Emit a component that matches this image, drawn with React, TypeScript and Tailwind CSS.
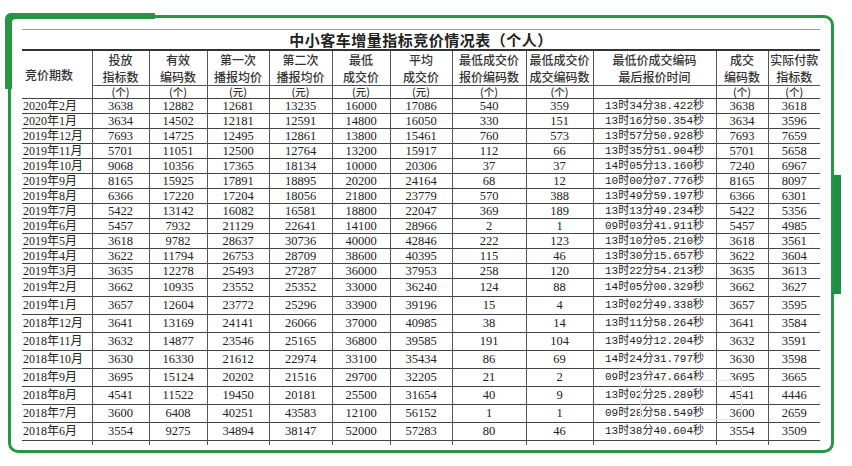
import React from 'react';

const cols = [70, 57, 58, 62, 63, 58, 62, 74, 67, 123, 52, 52];

const heads: [string, string, string][] = [
    ['投放', '指标数', '(个)'],
    ['有效', '编码数', '(个)'],
    ['第一次', '播报均价', '(元)'],
    ['第二次', '播报均价', '(元)'],
    ['最低', '成交价', '(元)'],
    ['平均', '成交价', '(元)'],
    ['最低成交价', '报价编码数', '(个)'],
    ['最低成交价', '成交编码数', '(个)'],
    ['最低价成交编码', '最后报价时间', ''],
    ['成交', '编码数', '(个)'],
    ['实际付款', '指标数', '(个)'],
];

const rows: string[][] = [
    ['2020年2月', '3638', '12882', '12681', '13235', '16000', '17086', '540', '359', '13时34分38.422秒', '3638', '3618'],
    ['2020年1月', '3634', '14502', '12181', '12591', '14800', '16050', '330', '151', '13时16分50.354秒', '3634', '3596'],
    ['2019年12月', '7693', '14725', '12495', '12861', '13800', '15461', '760', '573', '13时57分50.928秒', '7693', '7659'],
    ['2019年11月', '5701', '11051', '12500', '12764', '13200', '15917', '112', '66', '13时35分51.904秒', '5701', '5658'],
    ['2019年10月', '9068', '10356', '17365', '18134', '10000', '20306', '37', '37', '14时05分13.160秒', '7240', '6967'],
    ['2019年9月', '8165', '15925', '17891', '18895', '20200', '24164', '68', '12', '10时00分07.776秒', '8165', '8097'],
    ['2019年8月', '6366', '17220', '17204', '18056', '21800', '23779', '570', '388', '13时49分59.197秒', '6366', '6301'],
    ['2019年7月', '5422', '13142', '16082', '16581', '18800', '22047', '369', '189', '13时13分49.234秒', '5422', '5356'],
    ['2019年6月', '5457', '7932', '21129', '22641', '14100', '28966', '2', '1', '09时03分41.911秒', '5457', '4985'],
    ['2019年5月', '3618', '9782', '28637', '30736', '40000', '42846', '222', '123', '13时10分05.210秒', '3618', '3561'],
    ['2019年4月', '3622', '11794', '26753', '28709', '38600', '40395', '115', '46', '13时30分15.657秒', '3622', '3604'],
    ['2019年3月', '3635', '12278', '25493', '27287', '36000', '37953', '258', '120', '13时22分54.213秒', '3635', '3613'],
    ['2019年2月', '3662', '10935', '23552', '25352', '33000', '36240', '124', '88', '14时05分00.329秒', '3662', '3627'],
    ['2019年1月', '3657', '12604', '23772', '25296', '33900', '39196', '15', '4', '13时02分49.338秒', '3657', '3595'],
    ['2018年12月', '3641', '13169', '24141', '26066', '37000', '40985', '38', '14', '13时11分58.264秒', '3641', '3584'],
    ['2018年11月', '3632', '14877', '23546', '25165', '36800', '39585', '191', '104', '13时49分12.204秒', '3632', '3591'],
    ['2018年10月', '3630', '16330', '21612', '22974', '33100', '35434', '86', '69', '14时24分31.797秒', '3630', '3598'],
    ['2018年9月', '3695', '15124', '20202', '21516', '29700', '32205', '21', '2', '09时23分47.664秒', '3695', '3665'],
    ['2018年8月', '4541', '11522', '19450', '20181', '25500', '31654', '40', '9', '13时02分25.289秒', '4541', '4446'],
    ['2018年7月', '3600', '6408', '40251', '43583', '12100', '56152', '1', '1', '09时28分58.549秒', '3600', '2659'],
    ['2018年6月', '3554', '9275', '34894', '38147', '52000', '57283', '80', '46', '13时38分40.604秒', '3554', '3509'],
];

const serif = "font-['Liberation_Serif','Noto_Sans_CJK_SC',serif]";
const cjk = "font-['Noto_Sans_CJK_SC',sans-serif]";
const mono = "font-['Liberation_Mono','Noto_Sans_CJK_SC',monospace]";

export default function App() {
    return (
        <div className="relative w-[852px] h-[466px] bg-white overflow-hidden pt-[15px] pl-[8px] pr-[18px] pb-[13px]">
            {/* thick green accents on the frame */}
            <div className="absolute left-[5px] top-[13px] w-[150px] h-[6px] rounded-tl-[10px] bg-[#2a9446]" />
            <div className="absolute left-[5px] top-[13px] w-[7px] h-[76px] rounded-tl-[10px] bg-[#2a9446]" />
            <div className="absolute left-[833px] top-[175px] w-[8px] h-[119px] bg-[#1f8e45]" />

            <div className="h-full border-[3px] border-[#2a9446] rounded-[10px] px-[11px] pt-[11px]">
                <div className="border-t border-[#9a9a9a]" />
                <div className={`${cjk} h-[19px] text-center text-[15px] leading-[19px] font-bold text-[#222] tracking-[0.5px]`}>
                    中小客车增量指标竞价情况表（个人）
                </div>
                <table className="table-fixed border-collapse w-[798px] text-[#222]">
                    <colgroup>
                        {cols.map((w, i) => (
                            <col key={i} style={{ width: w }} />
                        ))}
                    </colgroup>
                    <thead>
                        <tr className="h-[35px] border-t-2 border-[#333]">
                            <th
                                rowSpan={2}
                                className={`${cjk} text-left pl-[3px] text-[12px] font-medium text-[#333] border-b border-[#444] p-0`}
                            >
                                竞价期数
                            </th>
                            {heads.map((h, i) => (
                                <th
                                    key={i}
                                    className={`${cjk} border-l border-[#555] text-[12px] leading-[17px] font-medium text-[#333] p-0 whitespace-nowrap`}
                                >
                                    <div>{h[0]}</div>
                                    <div>{h[1]}</div>
                                </th>
                            ))}
                        </tr>
                        <tr className="h-[12px] border-t border-[#555] border-b">
                            {heads.map((h, i) => (
                                <th
                                    key={i}
                                    className={`${cjk} border-l border-[#555] border-b border-b-[#444] text-[10.5px] leading-[12px] font-medium text-[#333] p-0`}
                                >
                                    {h[2]}
                                </th>
                            ))}
                        </tr>
                    </thead>
                    <tbody>
                        {rows.map((r, ri) => (
                            <tr key={ri} className={`${ri < 12 ? 'h-[15px]' : 'h-[18px]'} border-b border-[#444]`}>
                                {r.map((c, ci) => (
                                    <td
                                        key={ci}
                                        className={
                                            ci === 0
                                                ? `${serif} text-left pl-[1px] text-[12px] leading-[13px] p-0 whitespace-nowrap`
                                                : ci === 9
                                                  ? `${mono} border-l border-[#555] text-center text-[11px] leading-[13px] p-0 whitespace-nowrap`
                                                  : `${serif} border-l border-[#555] text-center text-[12.5px] leading-[13px] p-0`
                                        }
                                    >
                                        {c}
                                    </td>
                                ))}
                            </tr>
                        ))}
                        <tr className="h-[4px]">
                            {cols.map((_, i) => (
                                <td key={i} className={i === 0 ? 'p-0' : 'p-0 border-l border-[#555]'} />
                            ))}
                        </tr>
                    </tbody>
                </table>
            </div>

            {/* faint watermark frame */}
            <div className="absolute left-[640px] top-[380px] w-[102px] h-[40px] border border-[#e4e4e4] pointer-events-none" />
        </div>
    );
}
